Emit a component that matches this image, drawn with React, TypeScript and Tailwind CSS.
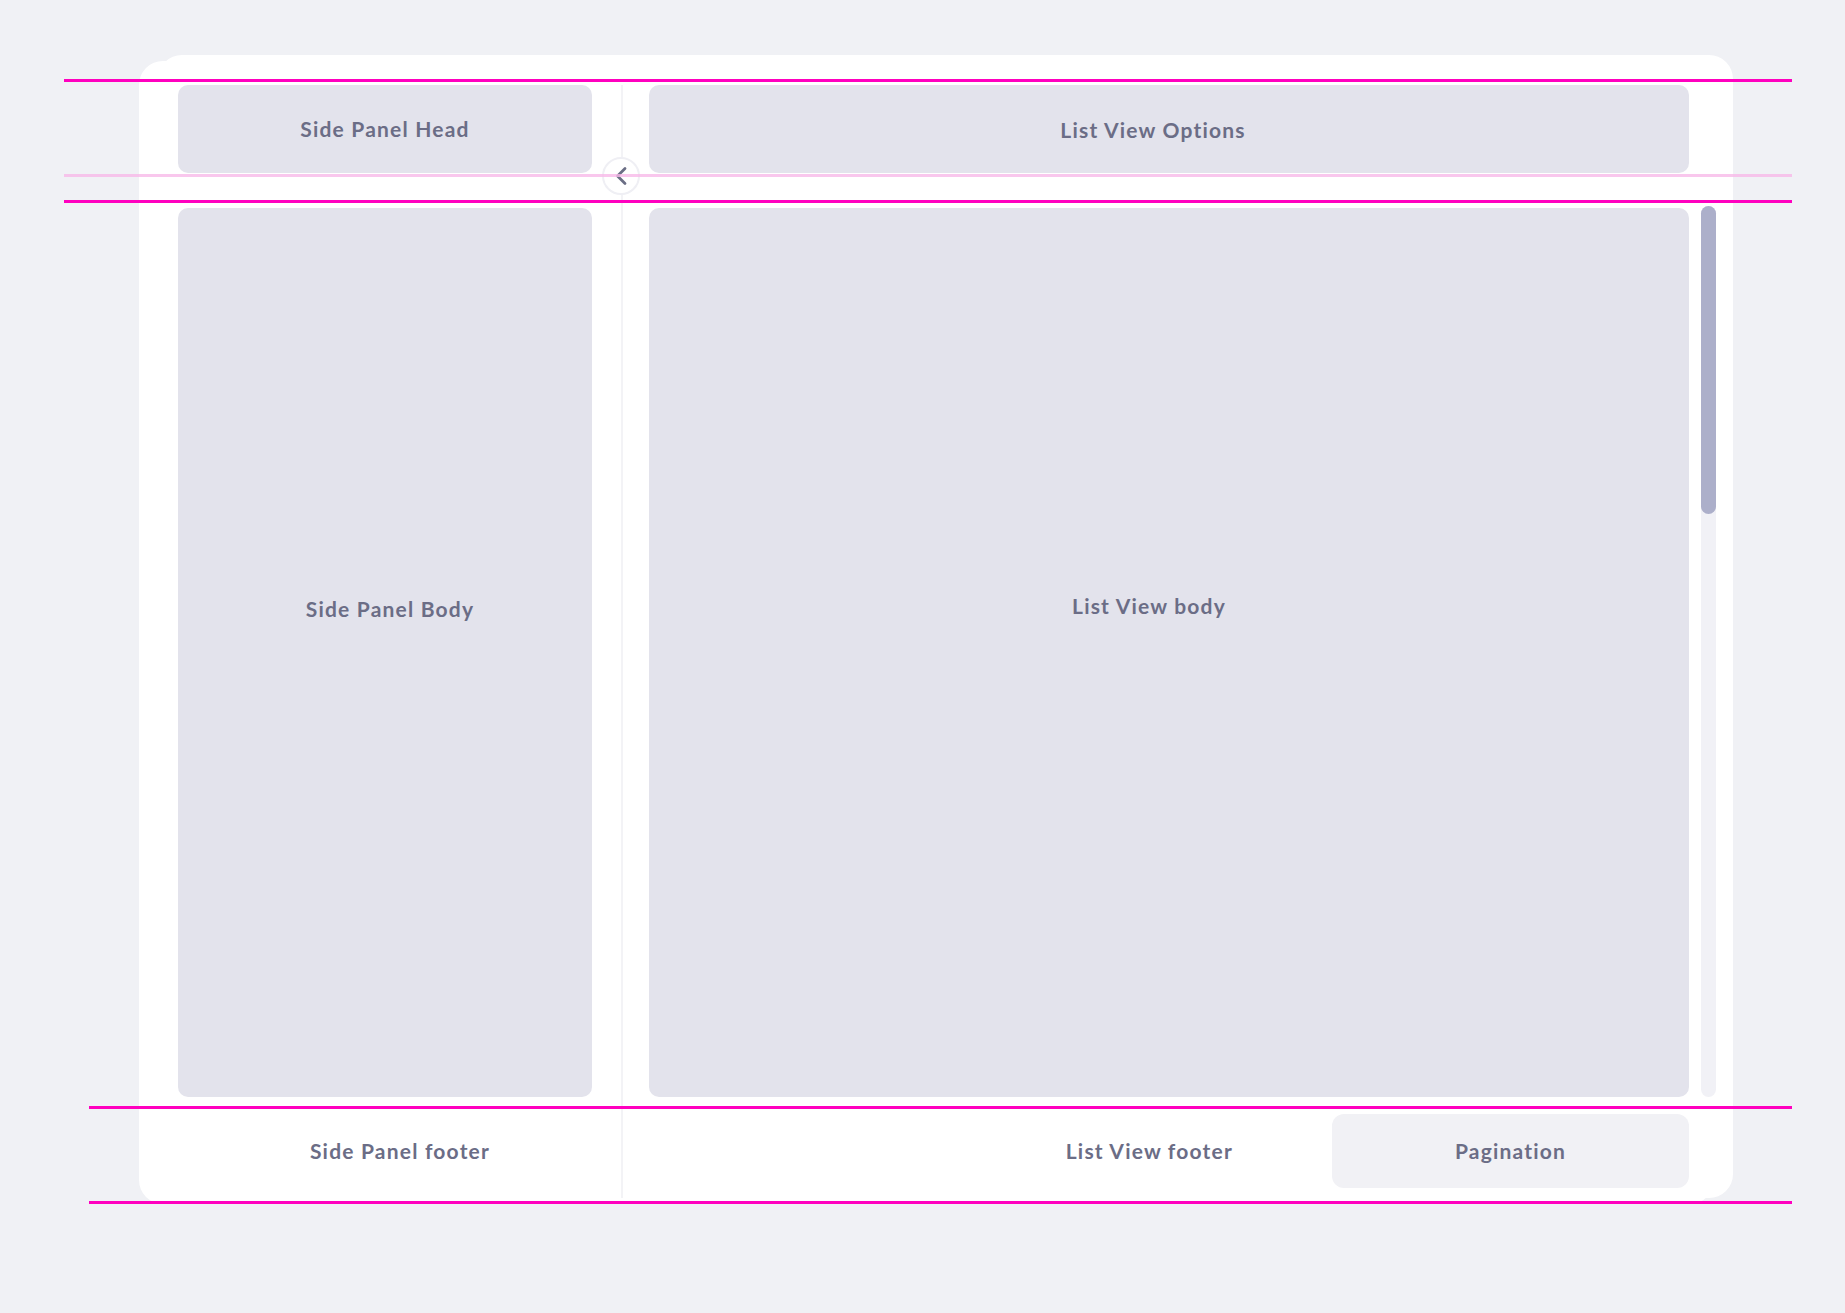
const FONT = { fontFamily: "Lato, 'Noto Sans', sans-serif" };

function GuideLine({ top, left, light }: { top: string; left: string; light?: boolean }) {
  return (
    <div
      className={`absolute h-[3px] ${top} ${left} right-[53px] ${
        light ? "bg-[#f7b9e8]/80" : "bg-[#ff00bf]"
      }`}
    />
  );
}

export default function App() {
  return (
    <div
      className="relative min-h-screen w-full bg-[#f0f1f5] pt-[55px] pl-[158px] pb-[110px] text-[21px] font-bold tracking-[1.2px] text-[#6b6d86]"
      style={FONT}
    >
      {/* Layout card */}
      <div className="relative flex h-[1143px] w-[1575px] rounded-[24px] bg-white shadow-[-19px_6px_0_0_#ffffff]">
        {/* Side panel */}
        <div className="flex w-[463px] flex-col pl-[20px] pr-[29px] pt-[30px]">
          <div className="flex h-[88px] items-center justify-center rounded-[10px] bg-[#e3e3ec]">
            Side Panel Head
          </div>
          <div className="mt-[35px] flex h-[889px] items-center justify-center rounded-[10px] bg-[#e3e3ec] pb-[88px] pl-[10px]">
            Side Panel Body
          </div>
          <div className="flex flex-1 items-center justify-center pl-[30px] pt-[6px]">
            Side Panel footer
          </div>
        </div>

        {/* Divider */}
        <div className="mt-[30px] w-[2px] bg-[#f3f3f6]" />

        {/* List view */}
        <div className="flex flex-1 flex-col pl-[26px] pr-[17px] pt-[30px]">
          <div className="mr-[27px] flex h-[88px] items-center justify-center rounded-[10px] bg-[#e3e3ec] pr-[32px] pt-[2px]">
            List View Options
          </div>
          <div className="mt-[35px] flex h-[889px] gap-[12px]">
            <div className="flex flex-1 items-center justify-center rounded-[10px] bg-[#e3e3ec] pb-[94px] pr-[40px]">
              List View body
            </div>
            <div className="-mt-[2px] flex w-[15px] flex-col rounded-full bg-[#f1f1f6]">
              <div className="h-[308px] rounded-full bg-[#acafca]" />
            </div>
          </div>
          <div className="flex flex-1 items-start justify-end gap-[99px] pr-[27px] pt-[17px]">
            <div className="flex h-[74px] items-center">List View footer</div>
            <div className="flex h-[74px] w-[357px] items-center justify-center rounded-[12px] bg-[#f1f1f5]">
              Pagination
            </div>
          </div>
        </div>

        {/* Collapse toggle */}
        <button
          type="button"
          className="absolute left-[444px] top-[102px] flex h-[38px] w-[38px] items-center justify-center rounded-full border-2 border-[#efeff4] bg-white text-[#6b6e85]"
        >
          <svg width="20" height="24" viewBox="0 0 20 24" fill="none">
            <path
              d="M14 4.5 6.5 12l7.5 7.5"
              stroke="currentColor"
              strokeWidth="2.8"
              strokeLinecap="round"
              strokeLinejoin="round"
            />
          </svg>
        </button>
      </div>

      {/* Guide lines */}
      <GuideLine top="top-[79px]" left="left-[64px]" />
      <GuideLine top="top-[174px]" left="left-[64px]" light />
      <GuideLine top="top-[200px]" left="left-[64px]" />
      <GuideLine top="top-[1106px]" left="left-[89px]" />
      <GuideLine top="top-[1201px]" left="left-[89px]" />
    </div>
  );
}
